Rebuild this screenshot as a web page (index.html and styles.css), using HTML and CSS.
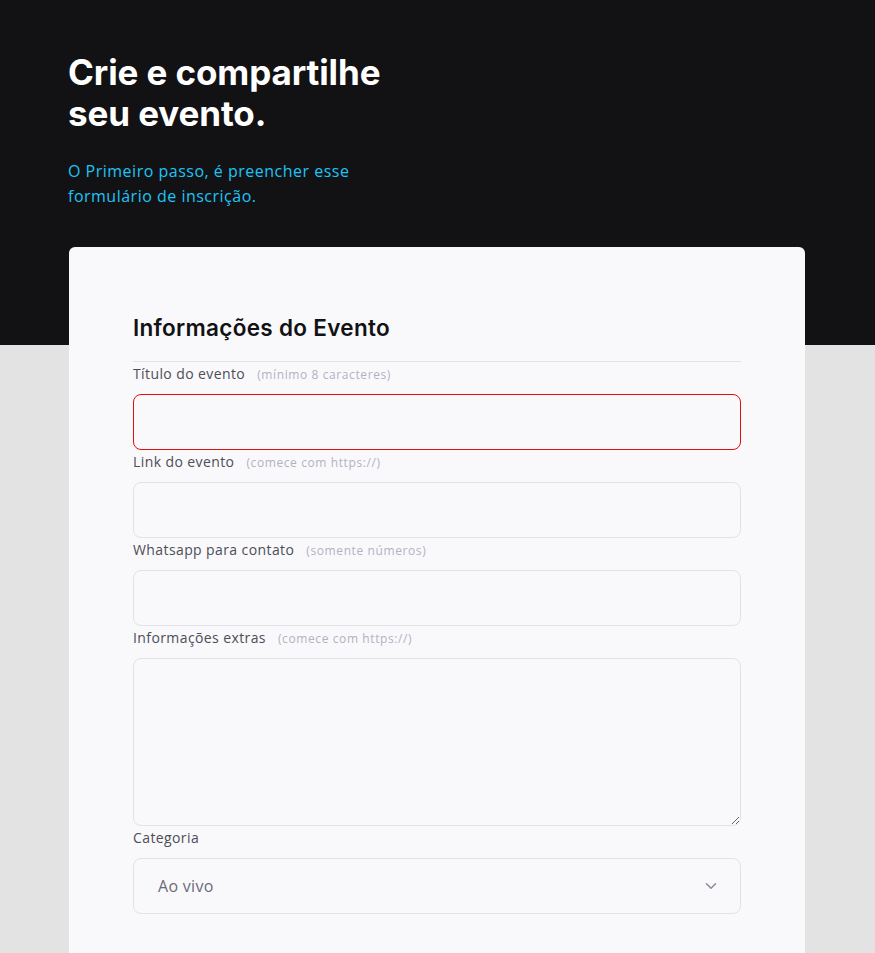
FILE: index.html
```html
<!DOCTYPE html>
<html lang="pt-BR">
<head>
<meta charset="utf-8">
<title>Crie e compartilhe seu evento</title>
<link rel="stylesheet" href="styles.css">
</head>
<body>
<main class="page">
  <header class="hero">
    <h1 class="hero-title">Crie e compartilhe<br>seu evento.</h1>
    <p class="hero-text">O Primeiro passo, é preencher esse formulário de inscrição.</p>
  </header>
  <form class="card">
    <h2 class="card-title">Informações do Evento</h2>
    <div class="field">
      <label class="label">Título do evento <span class="hint">(mínimo 8 caracteres)</span></label>
      <input class="control control-error" type="text">
    </div>
    <div class="field">
      <label class="label">Link do evento <span class="hint">(comece com https://)</span></label>
      <input class="control" type="text">
    </div>
    <div class="field">
      <label class="label">Whatsapp para contato <span class="hint">(somente números)</span></label>
      <input class="control" type="text">
    </div>
    <div class="field">
      <label class="label">Informações extras <span class="hint">(comece com https://)</span></label>
      <textarea class="control control-area"></textarea>
    </div>
    <div class="field">
      <label class="label">Categoria</label>
      <div class="control select">
        <span class="select-value">Ao vivo</span>
        <svg class="chevron" width="12" height="8" viewBox="0 0 12 8" fill="none"><path d="M1.5 1.8 6 6.2l4.5-4.4" stroke="#8d8d99" stroke-width="1.6" stroke-linecap="round" stroke-linejoin="round"/></svg>
      </div>
    </div>
  </form>
</main>
</body>
</html>
```
FILE: styles.css
```css
* { box-sizing: border-box; }
html, body { margin: 0; padding: 0; }
body {
  background: linear-gradient(#121214 0, #121214 345px, #e3e3e3 345px, #e3e3e3 100%);
  min-height: 953px;
  font-family: "Open Sans", "Noto Sans", sans-serif;
}
.page {
  width: 737px;
  margin-left: 68px;
}
.hero {
  padding-top: 52px;
}
.hero-title {
  margin: 0;
  color: #ffffff;
  font-family: Inter, "Liberation Sans", sans-serif;
  font-weight: 700;
  font-size: 35px;
  line-height: 41px;
  letter-spacing: -0.1px;
}
.hero-text {
  margin: 25px 0 0;
  width: 300px;
  color: #1fc4f5;
  font-size: 16px;
  line-height: 25px;
  letter-spacing: 0.5px;
}
.card {
  margin: 38px 0 0 1px;
  width: 736px;
  min-height: 720px;
  background: #f9f9fb;
  border-radius: 6px;
  padding: 64px 64px 40px;
}
.card-title {
  margin: 0;
  font-family: Inter, "Liberation Sans", sans-serif;
  font-weight: 600;
  font-size: 22.5px;
  line-height: 34px;
  letter-spacing: 0.3px;
  color: #121214;
  padding-bottom: 16px;
  border-bottom: 1px solid #e1e1e6;
}
.field {
  display: flex;
  flex-direction: column;
}
.label {
  display: block;
  height: 24px;
  font-size: 14px;
  line-height: 24px;
  color: #4d4d57;
  letter-spacing: 0.4px;
  margin-bottom: 8px;
  white-space: nowrap;
}
.hint {
  margin-left: 8px;
  font-size: 12px;
  line-height: 1;
  letter-spacing: 0.6px;
  color: #b2b2c2;
}
.control {
  display: block;
  width: 100%;
  height: 56px;
  background: #f9f9fb;
  border: 1px solid #e1e1e6;
  border-radius: 8px;
  font: inherit;
  outline: none;
  margin: 0;
}
.control-error {
  border-color: #e30e0e;
}
.control-area {
  height: 168px;
  resize: vertical;
}
.select {
  display: flex;
  align-items: center;
  justify-content: space-between;
  padding: 0 24px;
}
.select-value {
  font-size: 16px;
  letter-spacing: 0.3px;
  color: #6b6b78;
}
.chevron {
  margin-right: -1px;
}
```
